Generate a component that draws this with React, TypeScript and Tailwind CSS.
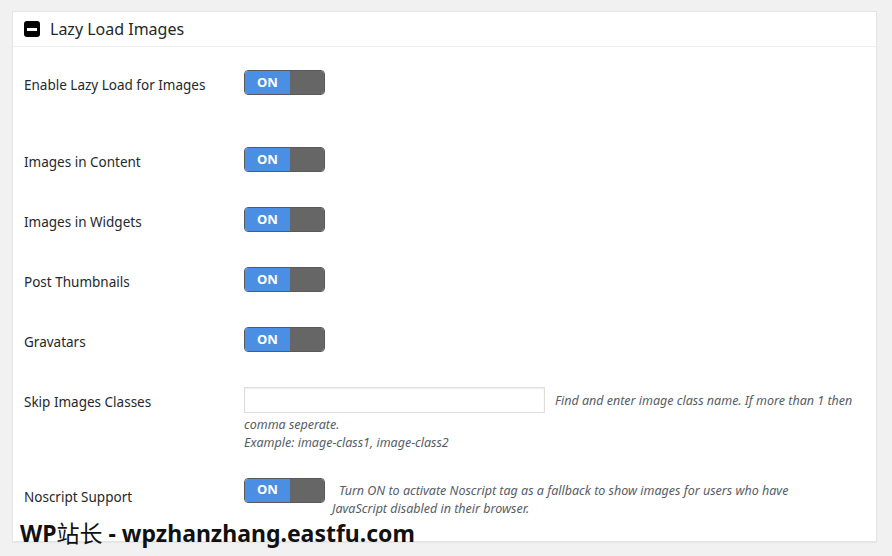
import React from 'react';

const sans = { fontFamily: '"Noto Sans", "Open Sans", Arial, sans-serif' };

function Toggle() {
  return (
    <div className="flex h-[25px] w-[81px] shrink-0 overflow-hidden rounded-[4px] border border-[#5a5a5a]">
      <div className="flex w-[45px] items-center justify-center bg-[#4a8fe3] text-[13px] font-bold text-white">
        ON
      </div>
      <div className="flex-1 bg-[#666666]" />
    </div>
  );
}

const toggleRows = ['Images in Content', 'Images in Widgets', 'Post Thumbnails', 'Gravatars'];

export default function App() {
  return (
    <div
      className="relative min-h-[556px] w-full bg-[#f1f1f1] pt-[11px] pl-[12px] text-[#23282d]"
      style={sans}
    >
      {/* Panel */}
      <div className="h-[531px] w-[865px] border border-[#e5e5e5] bg-white shadow-[0_1px_1px_rgba(0,0,0,0.04)]">
        <div className="flex h-[35px] items-center gap-[10px] border-b border-[#eeeeee] px-[11px]">
          <div className="flex h-[16px] w-[16px] items-center justify-center rounded-[3px] bg-black">
            <div className="h-[3px] w-[10px] bg-white" />
          </div>
          <h2 className="text-[16px] leading-none text-[#23282d]">Lazy Load Images</h2>
        </div>

        <div className="px-[11px] pt-[23px] text-[13.5px]">
          {/* Enable */}
          <div className="mb-[52px] flex items-start">
            <div className="w-[220px] pt-[5px] leading-[20px]">Enable Lazy Load for Images</div>
            <Toggle />
          </div>

          {toggleRows.map((label) => (
            <div key={label} className="mb-[35px] flex items-start">
              <div className="w-[220px] pt-[5px] leading-[20px]">{label}</div>
              <Toggle />
            </div>
          ))}

          {/* Skip classes */}
          <div className="flex items-start">
            <div className="w-[220px] pt-[5px] leading-[20px]">Skip Images Classes</div>
            <div className="w-[620px] text-[12.5px] italic leading-[18px] text-[#555d66]">
              <input
                type="text"
                className="mb-[2px] h-[26px] w-[301px] border border-[#dddddd] bg-white align-middle shadow-[inset_0_1px_2px_rgba(0,0,0,0.07)] outline-none"
              />
              <span className="ml-[10px] align-middle">
                Find and enter image class name. If more than 1 then comma seperate.
              </span>
              <br />
              Example: image-class1, image-class2
            </div>
          </div>

          {/* Noscript */}
          <div className="mt-[26px] flex items-start">
            <div className="w-[220px] pt-[9px] leading-[20px]">Noscript Support</div>
            <Toggle />
            <p className="ml-[7px] w-[470px] pt-[4px] indent-[7px] text-[12.5px] italic leading-[18px] text-[#555d66]">
              Turn ON to activate Noscript tag as a fallback to show images for users who have
              JavaScript disabled in their browser.
            </p>
          </div>
        </div>
      </div>

      {/* Watermark */}
      <div
        className="absolute top-[518px] left-[20px] text-[23px] leading-[30px] font-bold text-[#111111]"
        style={{ fontFamily: '"Noto Sans", "Noto Sans CJK SC", sans-serif' }}
      >
        WP<span className="font-normal">站长</span> - wpzhanzhang.eastfu.com
      </div>
    </div>
  );
}
